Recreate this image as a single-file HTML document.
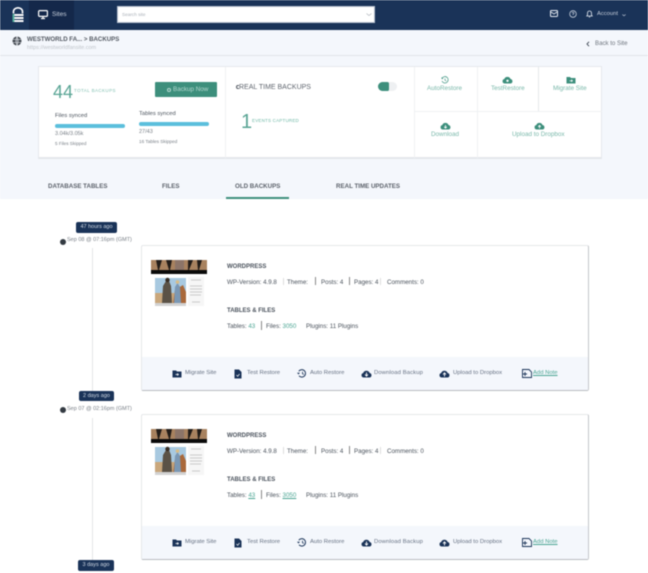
<!DOCTYPE html>
<html><head><meta charset="utf-8"><style>
*{box-sizing:border-box}
html,body{margin:0;padding:0;width:648px;height:573px;overflow:hidden;background:#fff}
body{font-family:"Liberation Sans",sans-serif;position:relative}
#w{position:absolute;left:0;top:0;width:648px;height:573px;overflow:hidden;filter:blur(.4px)}
.a,.t{position:absolute}
.t{white-space:nowrap;line-height:1}
svg{position:absolute;overflow:visible}
.dk{color:#4a525c}
.b{font-weight:bold}
.card{position:absolute;left:141px;width:448px;height:146px;background:#fff;border:1px solid #e6e8ea;border-right-color:#c4c7ca;border-bottom-color:#b9bcc0;border-radius:2px}
.foot{position:absolute;left:0;right:0;bottom:0;height:33px;background:#f4f7fc}
.pill{position:absolute;background:#1a3358;color:#d3dbe6;font-size:5.500px;text-align:center;border-radius:2px;height:11px;line-height:11px}
.sep{position:absolute;width:1px;background:#888}
.tab{position:absolute;white-space:nowrap;line-height:1;top:183.500px;font-size:6.200px;font-weight:bold;color:#5c626b}
.act{position:absolute;white-space:nowrap;line-height:1;font-size:6.300px;color:#7ab8aa}
.f{position:absolute;white-space:nowrap;line-height:1;top:125px;font-size:5.900px;color:#667183}
.c{position:absolute;white-space:nowrap;line-height:1;font-size:6.200px;color:#4a525c}
</style></head><body><div id="w">
<div class="a" style="left:0;top:0;width:648px;height:30px;background:#1a3358"></div>
<div class="a" style="left:29px;top:0;width:45px;height:30px;background:#14284a"></div>
<svg style="left:12px;top:7px" width="12" height="15" viewBox="0 0 12 15"><path d="M1.500 6.500V4.500a4.500 3.700 0 0 1 9 0V6.500" fill="none" stroke="#fff" stroke-width="1.600"/><rect x="0.500" y="7" width="11" height="2" fill="#fff"/><rect x="0.500" y="10" width="11" height="2" fill="#fff"/><rect x="0.500" y="13" width="11" height="2" fill="#fff"/><rect x="0.500" y="7" width="1.800" height="8" fill="#4fae9a"/></svg>
<svg style="left:38px;top:10px" width="10" height="9" viewBox="0 0 10 9"><rect x=".6" y=".6" width="8.800" height="5.800" rx="1" fill="none" stroke="#fff" stroke-width="1.200"/><path d="M3 8.500H7M5 6.500V8.500" stroke="#fff" stroke-width="1.200"/></svg>
<div class="t" style="left:52px;top:11.500px;font-size:6.500px;color:#c6cedb">Sites</div>
<div class="a" style="left:117px;top:6px;width:258px;height:17px;background:#fff;border:1px solid #b9c2cf"></div>
<div class="t" style="left:122px;top:12.500px;font-size:4.700px;color:#aab0b8">Search site</div>
<svg style="left:366px;top:13px" width="6" height="3" viewBox="0 0 6 3"><path d="M.5.500L3 2.500L5.500.500" fill="none" stroke="#b5bac0" stroke-width=".8"/></svg>
<svg style="left:550px;top:10px" width="8" height="7" viewBox="0 0 8 7"><rect x=".5" y=".5" width="7" height="6" rx=".7" fill="none" stroke="#e6ebf2"/><path d="M1 2L4 4L7 2" fill="none" stroke="#e6ebf2" stroke-width=".8"/></svg>
<svg style="left:569px;top:10px" width="8" height="8" viewBox="0 0 8 8"><circle cx="4" cy="4" r="3.300" fill="none" stroke="#c6cedb" stroke-width=".8"/><path d="M3 3Q4 1.800 5 3Q5 3.800 4 4.300V5" fill="none" stroke="#c6cedb" stroke-width=".7"/></svg>
<svg style="left:586px;top:9.500px" width="7" height="8" viewBox="0 0 7 8"><path d="M3.500 1Q1.500 1 1.500 3.500V5L.8 6H6.200L5.500 5V3.500Q5.500 1 3.500 1Z" fill="none" stroke="#e6ebf2" stroke-width=".8"/><path d="M2.800 7H4.200" stroke="#e6ebf2" stroke-width=".8"/></svg>
<div class="t" style="left:597px;top:11.500px;font-size:5.800px;color:#c6cedb">Account</div>
<svg style="left:622px;top:14px" width="4" height="2.500" viewBox="0 0 5 3"><path d="M.5.500L2.500 2.200L4.500.500" fill="none" stroke="#c6cedb" stroke-width=".8"/></svg>

<div class="a" style="left:0;top:30px;width:648px;height:169px;background:#f4f7fc"></div>
<div class="a" style="left:0;top:55px;width:648px;height:1px;background:#e2e5e9"></div>
<svg style="left:12px;top:36px" width="10" height="10" viewBox="0 0 10 10"><circle cx="5" cy="5" r="4.500" fill="#40464e"/><path d="M.5 3.500H9.500M.5 6.500H9.500M5 .5V9.500M5 .5Q2.500 5 5 9.500M5 .5Q7.500 5 5 9.500" fill="none" stroke="#f4f7fc" stroke-width=".5"/></svg>
<div class="t b" style="left:27px;top:37px;font-size:6.100px;color:#535962">WESTWORLD FA... &gt; BACKUPS</div>
<div class="t" style="left:27px;top:45.500px;font-size:5.500px;color:#c0c5cb">https://westworldfansite.com</div>
<svg style="left:586px;top:41px" width="4" height="6" viewBox="0 0 4 6"><path d="M3 .8L1 3L3 5.200" fill="none" stroke="#3d4652" stroke-width=".9"/></svg>
<div class="t" style="left:595px;top:40.500px;font-size:6.100px;color:#6e757e">Back to Site</div>

<div class="a" style="left:38px;top:65.500px;width:564px;height:93px;background:#fff;border:1px solid #e6e9ed;border-bottom:2px solid #e4e7eb"></div>
<div class="a" style="left:225px;top:67px;width:1px;height:91px;background:#eff1f3"></div>
<div class="a" style="left:414px;top:67px;width:1px;height:91px;background:#eff1f3"></div>
<div class="a" style="left:477px;top:67px;width:1px;height:91px;background:#eff1f3"></div>
<div class="a" style="left:538px;top:67px;width:1px;height:45px;background:#e6e8ea"></div>
<div class="a" style="left:414px;top:111px;width:188px;height:1px;background:#eff1f3"></div>

<div class="t" style="left:53px;top:82.800px;font-size:18px;color:#5aa595">44</div>
<div class="t" style="left:74px;top:89px;font-size:4.500px;letter-spacing:.4px;color:#82c0b2">TOTAL BACKUPS</div>
<div class="a" style="left:155px;top:82px;width:62px;height:15px;background:#3d8f7c;border-radius:1px"></div>
<div class="a" style="left:167px;top:87.500px;width:4px;height:4px;border:1px solid #b5d9d0;border-radius:50%"></div>
<div class="t" style="left:173px;top:86.500px;font-size:6.300px;color:#b5d9d0">Backup Now</div>
<div class="t dk" style="left:55px;top:113.500px;font-size:5.800px">Files synced</div>
<div class="a" style="left:55px;top:123.500px;width:70px;height:4.500px;background:#5bbfdc;border-radius:3px"></div>
<div class="t" style="left:55px;top:131.500px;font-size:5.500px;color:#7a8088">3.04k/3.05k</div>
<div class="t" style="left:55px;top:142px;font-size:4.600px;color:#7a8088">5 Files Skipped</div>
<div class="t dk" style="left:139px;top:111.500px;font-size:5.800px">Tables synced</div>
<div class="a" style="left:139px;top:121.500px;width:70px;height:4.500px;background:#5bbfdc;border-radius:3px"></div>
<div class="t" style="left:139px;top:129.500px;font-size:5.500px;color:#7a8088">27/43</div>
<div class="t" style="left:139px;top:140px;font-size:4.700px;color:#7a8088">16 Tables Skipped</div>

<div class="a" style="left:236px;top:84.500px;width:4.500px;height:4.500px;border:.8px solid #555b64;border-radius:50%"></div>
<div class="t" style="left:238.500px;top:84px;font-size:7px;color:#60666f;background:#fff;padding-left:.5px">REAL TIME BACKUPS</div>
<div class="a" style="left:378px;top:82px;width:19px;height:9px;background:#eef0f2;border-radius:5px"></div>
<div class="a" style="left:378px;top:82px;width:11px;height:9px;background:#3d8f7c;border-radius:5px 2px 2px 5px"></div>
<div class="t" style="left:241px;top:112px;font-size:20px;color:#5aa595">1</div>
<div class="t" style="left:252px;top:119px;font-size:4.500px;letter-spacing:.2px;color:#6fb8a7">EVENTS CAPTURED</div>

<svg style="left:441px;top:76px" width="8" height="8" viewBox="0 0 8 8"><path d="M1.300 2A3.200 3.200 0 1 1 1 5" fill="none" stroke="#4b9b89" stroke-width=".8"/><path d="M4 2.500V4.200L5.200 5" fill="none" stroke="#4b9b89" stroke-width=".7"/><path d="M.5 1V3H2.500" fill="#4b9b89"/></svg>
<div class="act" style="left:427px;top:85.500px">AutoRestore</div>
<svg style="left:502px;top:76px" width="11" height="8" viewBox="0 0 11 8"><path d="M2.500 7.500A2.300 2.300 0 0 1 2.300 3A3.300 3.300 0 0 1 8.500 3A2.300 2.300 0 0 1 8.700 7.500Z" fill="#3d8f7c"/><circle cx="5.500" cy="4.800" r="1.200" fill="#fff"/></svg>
<div class="act" style="left:491px;top:85.500px">TestRestore</div>
<svg style="left:566px;top:76px" width="10" height="8" viewBox="0 0 10 8"><path d="M.5 1H4L5 2H9.500V7.500H.5Z" fill="#3d8f7c"/><path d="M3.500 4.800H6.500M5.200 3.700L6.500 4.800L5.200 5.900" fill="none" stroke="#fff" stroke-width=".7"/></svg>
<div class="act" style="left:553px;top:85.500px">Migrate Site</div>
<svg style="left:440px;top:122px" width="11" height="8" viewBox="0 0 11 8"><path d="M2.500 7.500A2.300 2.300 0 0 1 2.300 3A3.300 3.300 0 0 1 8.500 3A2.300 2.300 0 0 1 8.700 7.500Z" fill="#3d8f7c"/><path d="M5.500 3V6M4.200 4.800L5.500 6.200L6.800 4.800" fill="none" stroke="#fff" stroke-width=".8"/></svg>
<div class="act" style="left:431px;top:131.500px">Download</div>
<svg style="left:534px;top:122px" width="11" height="8" viewBox="0 0 11 8"><path d="M2.500 7.500A2.300 2.300 0 0 1 2.300 3A3.300 3.300 0 0 1 8.500 3A2.300 2.300 0 0 1 8.700 7.500Z" fill="#3d8f7c"/><path d="M5.500 6.500V3.500M4.200 4.800L5.500 3.400L6.800 4.800" fill="none" stroke="#fff" stroke-width=".8"/></svg>
<div class="act" style="left:512px;top:131.500px">Upload to Dropbox</div>

<div class="tab" style="left:48px">DATABASE TABLES</div>
<div class="tab" style="left:162px">FILES</div>
<div class="tab" style="left:235px">OLD BACKUPS</div>
<div class="tab" style="left:336px">REAL TIME UPDATES</div>
<div class="a" style="left:226px;top:197px;width:63px;height:2px;background:#3d8f7c"></div>

<div class="a" style="left:92px;top:248px;width:1px;height:143px;background:#e4e5e7"></div>
<div class="a" style="left:92px;top:418px;width:1px;height:142px;background:#e4e5e7"></div>

<div class="pill" style="left:76px;top:222px;width:41px">47 hours ago</div>
<div class="a" style="left:60px;top:238.500px;width:6px;height:6px;border-radius:50%;background:#333a42"></div>
<div class="t" style="left:67px;top:238px;font-size:5.500px;color:#7a8088">Sep 08 @ 07:16pm (GMT)</div>

<div class="card" style="top:245px">
<svg style="left:9px;top:14px" width="56" height="46" viewBox="0 0 56 46"><rect width="56" height="10" fill="#a8825f"/><path d="M5 0H11L8 10H7ZM15 0H21L19 10H18ZM37 0H42L38 10H37ZM46 0H51L48 10H47ZM26 0H31L30 6H27Z" fill="#221c18"/><rect x="24" y="0" width="9" height="10" fill="#8c7468"/><rect y="10" width="56" height="4" fill="#0a0a0a"/><rect x="4" y="18" width="31" height="25" fill="#a8c9e0"/><rect x="4" y="33" width="31" height="10" fill="#c9a77c"/><path d="M22 43L24 30L32 25L35 32V43Z" fill="#a9683a"/><path d="M11 43L12 26L15 21L18 21L20 26L21 43Z" fill="#5b5246"/><circle cx="16.500" cy="20" r="2.200" fill="#3a2e24"/><path d="M23 43L24 27L26.500 23L29 27L30 43Z" fill="#7b98b4"/><circle cx="26.500" cy="22" r="1.800" fill="#d9bd86"/><rect x="4" y="43" width="31" height="3" fill="#d2d2d2"/><rect x="37" y="17" width="16" height="29" fill="#f6f6f6"/><path d="M40 20H50M39 26H51M39 29H51M39 32H51M39 35H50M41 42H49" stroke="#bbb" stroke-width=".8"/></svg>

<div class="t b" style="left:85px;top:17.500px;font-size:6px;color:#4a525c">WORDPRESS</div>
<div class="c" style="left:85px;top:33.500px">WP-Version: 4.9.8</div>
<div class="sep" style="left:141px;top:32px;height:7px;background:#ddd"></div>
<div class="c" style="left:145px;top:33.500px">Theme:</div>
<div class="sep" style="left:173px;top:31px;height:8px"></div>
<div class="c" style="left:179px;top:33.500px">Posts: 4</div>
<div class="sep" style="left:207px;top:31px;height:8px"></div>
<div class="c" style="left:212px;top:33.500px">Pages: 4</div>
<div class="sep" style="left:238px;top:32px;height:7px;background:#ddd"></div>
<div class="c" style="left:245px;top:33.500px">Comments: 0</div>
<div class="t b" style="left:85px;top:61.500px;font-size:6px;color:#4a525c">TABLES &amp; FILES</div>
<div class="c" style="left:85px;top:77.500px">Tables: <span style="color:#4ba593">43</span></div>
<div class="sep" style="left:119px;top:75px;height:9px"></div>
<div class="c" style="left:124px;top:77.500px">Files: <span style="color:#4ba593">3050</span></div>
<div class="c" style="left:164px;top:77.500px">Plugins: 11 Plugins</div>
<div class="foot"></div>
<svg style="left:30px;top:123.500px" width="10" height="8" viewBox="0 0 10 8"><path d="M.5.500H4L5 1.500H9.500V7.500H.5Z" fill="#1a3358"/><path d="M3.500 4.500H6.500M5.200 3.400L6.500 4.500L5.200 5.600" fill="none" stroke="#fff" stroke-width=".7"/></svg>
<div class="f" style="left:43px">Migrate Site</div>
<svg style="left:92px;top:122.500px" width="8" height="10" viewBox="0 0 8 10"><path d="M.5.500H5L7.500 3V9.500H.5Z" fill="#1a3358"/><path d="M2.500 6L3.700 7.300L5.500 5" fill="none" stroke="#fff" stroke-width=".7"/></svg>
<div class="f" style="left:105px">Test Restore</div>
<svg style="left:155px;top:122.500px" width="10" height="9" viewBox="0 0 10 9"><path d="M1.800 2.200A3.700 3.700 0 1 1 2 6.800" fill="none" stroke="#1a3358" stroke-width="1"/><path d="M5.500 2.800V4.700L6.800 5.400" fill="none" stroke="#1a3358" stroke-width=".8"/><path d="M0 3.800H3L1.500 5.500Z" fill="#1a3358"/></svg>
<div class="f" style="left:168px">Auto Restore</div>
<svg style="left:219px;top:123px" width="11" height="9" viewBox="0 0 11 9"><path d="M2.500 8.500A2.300 2.300 0 0 1 2.200 4A3.400 3.400 0 0 1 8.600 4A2.300 2.300 0 0 1 8.700 8.500Z" fill="#1a3358"/><path d="M5.500 3.500V7M4 5.500L5.500 7.200L7 5.500" fill="none" stroke="#fff" stroke-width=".9"/></svg>
<div class="f" style="left:232px;letter-spacing:.1px">Download Backup</div>
<svg style="left:297px;top:123px" width="11" height="9" viewBox="0 0 11 9"><path d="M2.500 8.500A2.300 2.300 0 0 1 2.200 4A3.400 3.400 0 0 1 8.600 4A2.300 2.300 0 0 1 8.700 8.500Z" fill="#1a3358"/><path d="M5.500 7.500V4M4 5.500L5.500 3.800L7 5.500" fill="none" stroke="#fff" stroke-width=".9"/></svg>
<div class="f" style="left:311px">Upload to Dropbox</div>
<svg style="left:380px;top:122.500px" width="10" height="9" viewBox="0 0 10 9"><path d="M.5.500H7L9.500 3V8.500H.5Z" fill="none" stroke="#1a3358" stroke-width=".9"/><path d="M3 3V7M1 5H5" stroke="#1a3358" stroke-width=".9"/></svg>
<div class="f" style="left:391px;color:#4ba593;text-decoration:underline">Add Note</div>
</div>

<div class="pill" style="left:79px;top:391px;width:35px;height:10px;line-height:10px">2 days ago</div>
<div class="a" style="left:60px;top:406.500px;width:6px;height:6px;border-radius:50%;background:#333a42"></div>
<div class="t" style="left:67px;top:406.500px;font-size:5.500px;color:#7a8088">Sep 07 @ 02:16pm (GMT)</div>

<div class="card" style="top:414px">
<svg style="left:9px;top:14px" width="56" height="46" viewBox="0 0 56 46"><rect width="56" height="10" fill="#a8825f"/><path d="M5 0H11L8 10H7ZM15 0H21L19 10H18ZM37 0H42L38 10H37ZM46 0H51L48 10H47ZM26 0H31L30 6H27Z" fill="#221c18"/><rect x="24" y="0" width="9" height="10" fill="#8c7468"/><rect y="10" width="56" height="4" fill="#0a0a0a"/><rect x="4" y="18" width="31" height="25" fill="#a8c9e0"/><rect x="4" y="33" width="31" height="10" fill="#c9a77c"/><path d="M22 43L24 30L32 25L35 32V43Z" fill="#a9683a"/><path d="M11 43L12 26L15 21L18 21L20 26L21 43Z" fill="#5b5246"/><circle cx="16.500" cy="20" r="2.200" fill="#3a2e24"/><path d="M23 43L24 27L26.500 23L29 27L30 43Z" fill="#7b98b4"/><circle cx="26.500" cy="22" r="1.800" fill="#d9bd86"/><rect x="4" y="43" width="31" height="3" fill="#d2d2d2"/><rect x="37" y="17" width="16" height="29" fill="#f6f6f6"/><path d="M40 20H50M39 26H51M39 29H51M39 32H51M39 35H50M41 42H49" stroke="#bbb" stroke-width=".8"/></svg>

<div class="t b" style="left:85px;top:17.500px;font-size:6px;color:#4a525c">WORDPRESS</div>
<div class="c" style="left:85px;top:33.500px">WP-Version: 4.9.8</div>
<div class="sep" style="left:141px;top:32px;height:7px;background:#ddd"></div>
<div class="c" style="left:145px;top:33.500px">Theme:</div>
<div class="sep" style="left:173px;top:31px;height:8px"></div>
<div class="c" style="left:179px;top:33.500px">Posts: 4</div>
<div class="sep" style="left:207px;top:31px;height:8px"></div>
<div class="c" style="left:212px;top:33.500px">Pages: 4</div>
<div class="sep" style="left:238px;top:32px;height:7px;background:#ddd"></div>
<div class="c" style="left:245px;top:33.500px">Comments: 0</div>
<div class="t b" style="left:85px;top:61.500px;font-size:6px;color:#4a525c">TABLES &amp; FILES</div>
<div class="c" style="left:85px;top:77.500px">Tables: <span style="color:#4ba593;text-decoration:underline">43</span></div>
<div class="sep" style="left:119px;top:75px;height:9px"></div>
<div class="c" style="left:124px;top:77.500px">Files: <span style="color:#4ba593;text-decoration:underline">3050</span></div>
<div class="c" style="left:164px;top:77.500px">Plugins: 11 Plugins</div>
<div class="foot"></div>
<svg style="left:30px;top:123.500px" width="10" height="8" viewBox="0 0 10 8"><path d="M.5.500H4L5 1.500H9.500V7.500H.5Z" fill="#1a3358"/><path d="M3.500 4.500H6.500M5.200 3.400L6.500 4.500L5.200 5.600" fill="none" stroke="#fff" stroke-width=".7"/></svg>
<div class="f" style="left:43px">Migrate Site</div>
<svg style="left:92px;top:122.500px" width="8" height="10" viewBox="0 0 8 10"><path d="M.5.500H5L7.500 3V9.500H.5Z" fill="#1a3358"/><path d="M2.500 6L3.700 7.300L5.500 5" fill="none" stroke="#fff" stroke-width=".7"/></svg>
<div class="f" style="left:105px">Test Restore</div>
<svg style="left:155px;top:122.500px" width="10" height="9" viewBox="0 0 10 9"><path d="M1.800 2.200A3.700 3.700 0 1 1 2 6.800" fill="none" stroke="#1a3358" stroke-width="1"/><path d="M5.500 2.800V4.700L6.800 5.400" fill="none" stroke="#1a3358" stroke-width=".8"/><path d="M0 3.800H3L1.500 5.500Z" fill="#1a3358"/></svg>
<div class="f" style="left:168px">Auto Restore</div>
<svg style="left:219px;top:123px" width="11" height="9" viewBox="0 0 11 9"><path d="M2.500 8.500A2.300 2.300 0 0 1 2.200 4A3.400 3.400 0 0 1 8.600 4A2.300 2.300 0 0 1 8.700 8.500Z" fill="#1a3358"/><path d="M5.500 3.500V7M4 5.500L5.500 7.200L7 5.500" fill="none" stroke="#fff" stroke-width=".9"/></svg>
<div class="f" style="left:232px;letter-spacing:.1px">Download Backup</div>
<svg style="left:297px;top:123px" width="11" height="9" viewBox="0 0 11 9"><path d="M2.500 8.500A2.300 2.300 0 0 1 2.200 4A3.400 3.400 0 0 1 8.600 4A2.300 2.300 0 0 1 8.700 8.500Z" fill="#1a3358"/><path d="M5.500 7.500V4M4 5.500L5.500 3.800L7 5.500" fill="none" stroke="#fff" stroke-width=".9"/></svg>
<div class="f" style="left:311px">Upload to Dropbox</div>
<svg style="left:380px;top:122.500px" width="10" height="9" viewBox="0 0 10 9"><path d="M.5.500H7L9.500 3V8.500H.5Z" fill="none" stroke="#1a3358" stroke-width=".9"/><path d="M3 3V7M1 5H5" stroke="#1a3358" stroke-width=".9"/></svg>
<div class="f" style="left:391px;color:#4ba593;text-decoration:underline">Add Note</div>
</div>

<div class="pill" style="left:78px;top:560px;width:36px">3 days ago</div>
</div></body></html>
